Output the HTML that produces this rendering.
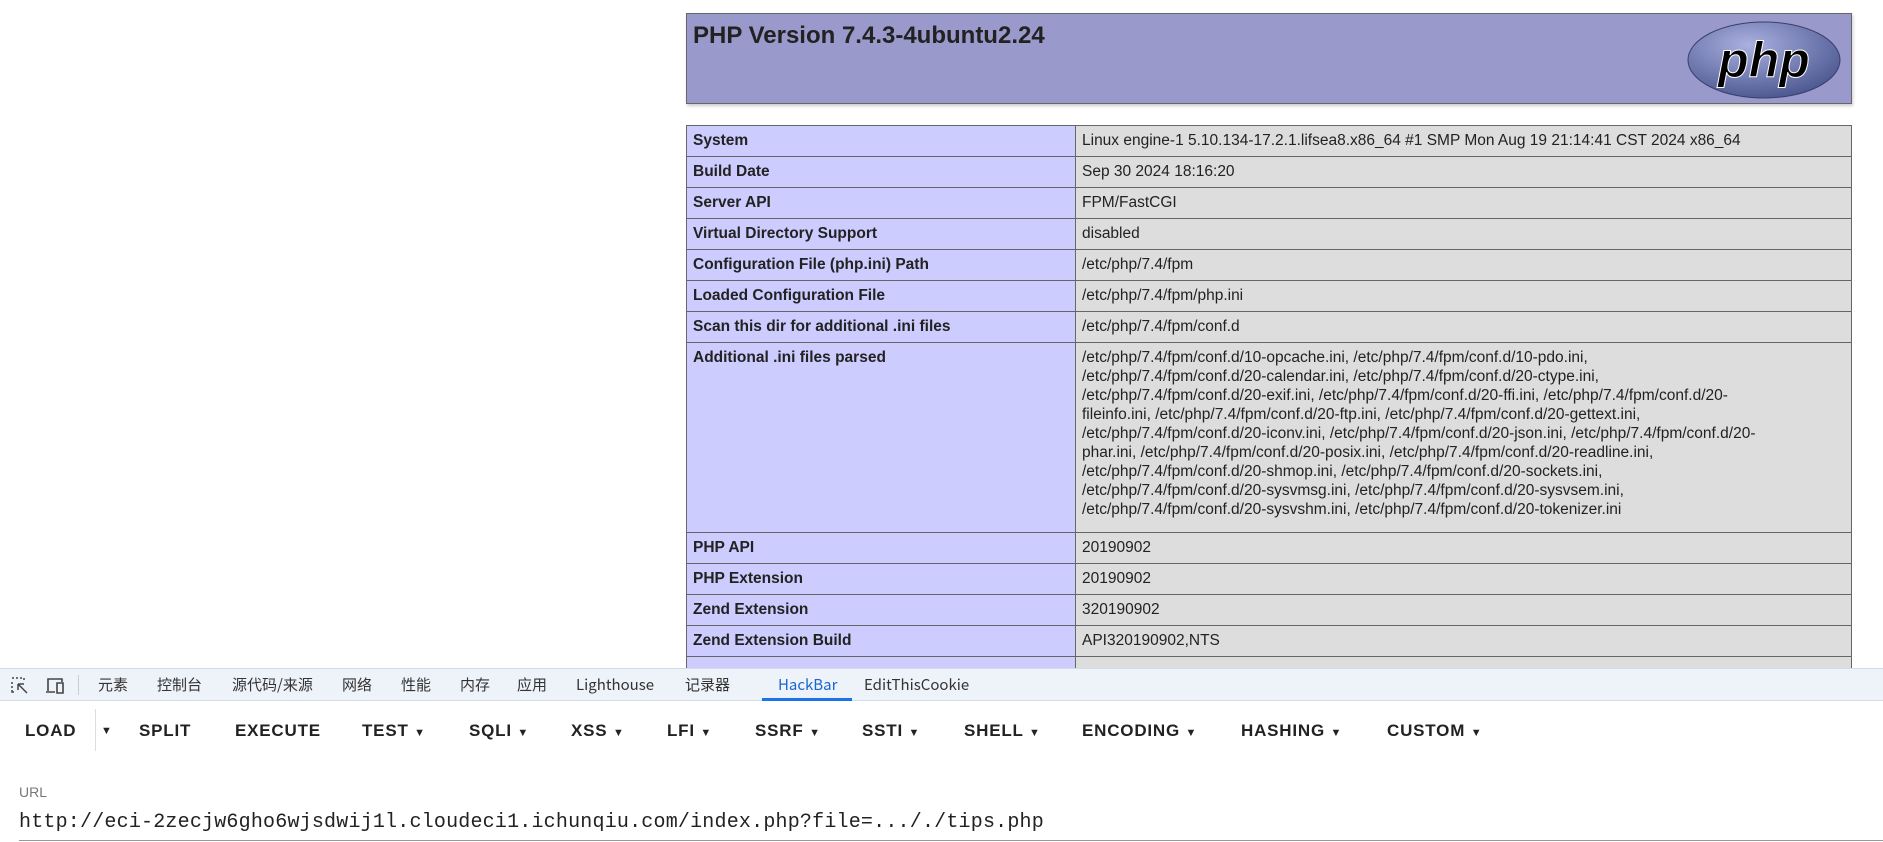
<!DOCTYPE html>
<html><head><meta charset="utf-8"><style>
*{margin:0;padding:0;box-sizing:border-box}
body{width:1883px;height:842px;overflow:hidden;background:#fff;font-family:"Liberation Sans","Noto Sans CJK SC",sans-serif;position:relative}
.hdr{position:absolute;left:686px;top:13px;width:1166px;height:91px;background:#99c;border:1px solid #666;box-shadow:1px 2px 3px #ccc}
.hdr h1{font-size:24px;font-weight:bold;color:#222;position:absolute;left:6px;top:8px}
table{position:absolute;left:686px;top:125px;width:1166px;border-collapse:collapse;font-size:15.5px;color:#222}
td{border:1px solid #666;padding:5px 6px;vertical-align:top;line-height:19px;height:31px}
td.e{background:#ccf;font-weight:bold;width:389px}
td.v{background:#ddd}
.dt{position:absolute;left:0;top:668px;width:1883px;height:33px;background:#eef2f9;border-top:1px solid #d5dce8;border-bottom:1px solid #d5dce8;font-size:15px;color:#333}
.dt span{position:absolute;top:6px;line-height:20px;height:20px;font-family:"Noto Sans CJK SC","Liberation Sans",sans-serif}
.hb{position:absolute;top:721px;font-size:17px;font-weight:bold;color:#222;letter-spacing:.8px}
.lbl{position:absolute;left:19px;top:784px;font-size:14px;color:#777}
.url{position:absolute;left:19px;top:811px;font-family:"Liberation Mono",monospace;font-size:20px;letter-spacing:0.2px;color:#222}
.line{position:absolute;left:19px;top:840px;width:1864px;height:1px;background:#999}
</style></head><body>
<div class="hdr"><h1>PHP Version 7.4.3-4ubuntu2.24</h1>
<svg style="position:absolute;right:8px;top:6px" width="157" height="80" viewBox="0 0 157 80"><defs><radialGradient id="g" cx="40%" cy="30%" r="70%"><stop offset="0" stop-color="#aab0e0"/><stop offset="1" stop-color="#4f5b93"/></radialGradient></defs><ellipse cx="78" cy="40" rx="76" ry="38" fill="url(#g)" stroke="#3b3f6a"/><text x="78" y="57" text-anchor="middle" font-family="Liberation Sans" font-style="italic" font-weight="bold" font-size="50" fill="#000" stroke="#fff" stroke-width="1">php</text></svg>
</div>
<table>
<tr><td class="e">System</td><td class="v">Linux engine-1 5.10.134-17.2.1.lifsea8.x86_64 #1 SMP Mon Aug 19 21:14:41 CST 2024 x86_64</td></tr>
<tr><td class="e">Build Date</td><td class="v">Sep 30 2024 18:16:20</td></tr>
<tr><td class="e">Server API</td><td class="v">FPM/FastCGI</td></tr>
<tr><td class="e">Virtual Directory Support</td><td class="v">disabled</td></tr>
<tr><td class="e">Configuration File (php.ini) Path</td><td class="v">/etc/php/7.4/fpm</td></tr>
<tr><td class="e">Loaded Configuration File</td><td class="v">/etc/php/7.4/fpm/php.ini</td></tr>
<tr><td class="e">Scan this dir for additional .ini files</td><td class="v">/etc/php/7.4/fpm/conf.d</td></tr>
<tr><td class="e" style="height:190px">Additional .ini files parsed</td><td class="v">/etc/php/7.4/fpm/conf.d/10-opcache.ini, /etc/php/7.4/fpm/conf.d/10-pdo.ini,<br>/etc/php/7.4/fpm/conf.d/20-calendar.ini, /etc/php/7.4/fpm/conf.d/20-ctype.ini,<br>/etc/php/7.4/fpm/conf.d/20-exif.ini, /etc/php/7.4/fpm/conf.d/20-ffi.ini, /etc/php/7.4/fpm/conf.d/20-<br>fileinfo.ini, /etc/php/7.4/fpm/conf.d/20-ftp.ini, /etc/php/7.4/fpm/conf.d/20-gettext.ini,<br>/etc/php/7.4/fpm/conf.d/20-iconv.ini, /etc/php/7.4/fpm/conf.d/20-json.ini, /etc/php/7.4/fpm/conf.d/20-<br>phar.ini, /etc/php/7.4/fpm/conf.d/20-posix.ini, /etc/php/7.4/fpm/conf.d/20-readline.ini,<br>/etc/php/7.4/fpm/conf.d/20-shmop.ini, /etc/php/7.4/fpm/conf.d/20-sockets.ini,<br>/etc/php/7.4/fpm/conf.d/20-sysvmsg.ini, /etc/php/7.4/fpm/conf.d/20-sysvsem.ini,<br>/etc/php/7.4/fpm/conf.d/20-sysvshm.ini, /etc/php/7.4/fpm/conf.d/20-tokenizer.ini</td></tr>
<tr><td class="e">PHP API</td><td class="v">20190902</td></tr>
<tr><td class="e">PHP Extension</td><td class="v">20190902</td></tr>
<tr><td class="e">Zend Extension</td><td class="v">320190902</td></tr>
<tr><td class="e">Zend Extension Build</td><td class="v">API320190902,NTS</td></tr>
<tr><td class="e"></td><td class="v"></td></tr>
</table>
<div style="position:absolute;left:0;top:668px;width:1883px;height:174px;background:#fff"></div>
<div class="dt">
<svg style="position:absolute;left:11px;top:8px" width="18" height="18" viewBox="0 0 18 18" fill="none" stroke="#444" stroke-width="1.5"><path d="M1 1h2M5 1h2M9 1h2M1 5v2M1 9v2M1 13v2h2M13 1v2M7 7l9 9M7 7v6M7 7h6"/></svg>
<svg style="position:absolute;left:45px;top:8px" width="20" height="18" viewBox="0 0 20 18" fill="none" stroke="#444" stroke-width="1.6"><path d="M3 14V2h14v3M1 15h9M12 6h6v10h-6z"/></svg>
<div style="position:absolute;left:78px;top:6px;width:1px;height:20px;background:#ccc"></div>
<span style="left:98px">元素</span><span style="left:157px">控制台</span><span style="left:232px">源代码/来源</span><span style="left:342px">网络</span><span style="left:401px">性能</span><span style="left:460px">内存</span><span style="left:517px">应用</span><span style="left:576px">Lighthouse</span><span style="left:685px">记录器</span><span style="left:778px;color:#1a66d2">HackBar</span><span style="left:864px">EditThisCookie</span>
<div style="position:absolute;left:762px;top:29px;width:90px;height:3px;background:#1a73e8"></div>
</div>
<div class="hb" style="left:25px">LOAD</div>
<div style="position:absolute;left:95px;top:709px;width:1px;height:42px;background:#ddd"></div>
<div class="hb" style="left:101px;font-size:11px;top:725px">▼</div>
<div class="hb" style="left:139px">SPLIT</div>
<div class="hb" style="left:235px">EXECUTE</div>
<div class="hb" style="left:362px">TEST <small style="font-size:11px">▼</small></div>
<div class="hb" style="left:469px">SQLI <small style="font-size:11px">▼</small></div>
<div class="hb" style="left:571px">XSS <small style="font-size:11px">▼</small></div>
<div class="hb" style="left:667px">LFI <small style="font-size:11px">▼</small></div>
<div class="hb" style="left:755px">SSRF <small style="font-size:11px">▼</small></div>
<div class="hb" style="left:862px">SSTI <small style="font-size:11px">▼</small></div>
<div class="hb" style="left:964px">SHELL <small style="font-size:11px">▼</small></div>
<div class="hb" style="left:1082px">ENCODING <small style="font-size:11px">▼</small></div>
<div class="hb" style="left:1241px">HASHING <small style="font-size:11px">▼</small></div>
<div class="hb" style="left:1387px">CUSTOM <small style="font-size:11px">▼</small></div>
<div class="lbl">URL</div>
<div class="url">http://eci-2zecjw6gho6wjsdwij1l.cloudeci1.ichunqiu.com/index.php?file=..././tips.php</div>
<div class="line"></div>
</body></html>
